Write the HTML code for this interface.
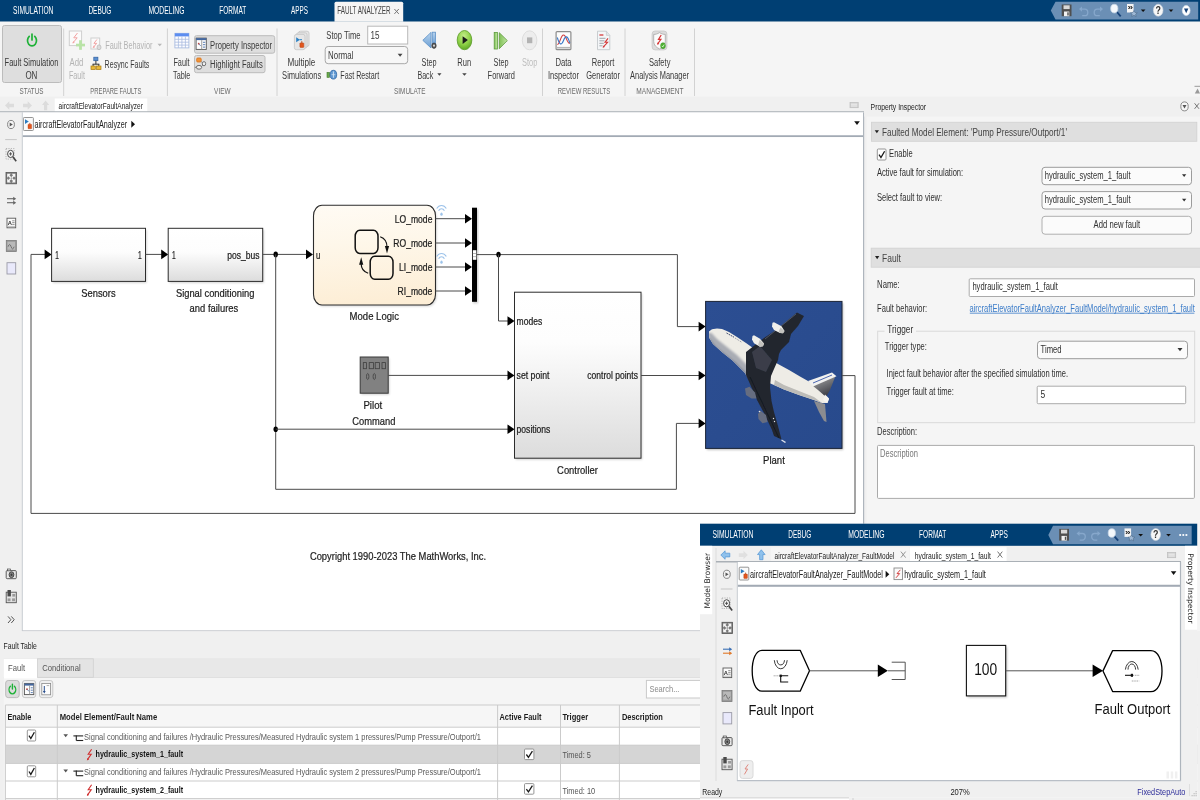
<!DOCTYPE html>
<html lang="en"><head><meta charset="utf-8"><title>Fault Analyzer</title>
<style>html,body{margin:0;padding:0;background:#f0f0f0;overflow:hidden}svg{display:block;will-change:transform;font-family:"Liberation Sans",sans-serif}</style></head>
<body>
<svg width="1200" height="800" viewBox="0 0 1200 800">
<rect x="0" y="0" width="1200" height="800" fill="#f0f0f0"/>
<rect x="0" y="0" width="1200" height="21.7" fill="#003f73"/>
<rect x="0" y="21.7" width="1200" height="75" fill="#f5f5f5"/>
<path d="M334.5,21.7 V3.3 Q334.5,1.8 336,1.8 H401.7 Q403.2,1.8 403.2,3.3 V21.7 Z" fill="#f5f5f5" />
<text x="13.1" y="14" font-size="10" fill="#fff" textLength="40.3" lengthAdjust="spacingAndGlyphs">SIMULATION</text>
<text x="88.4" y="14" font-size="10" fill="#fff" textLength="23" lengthAdjust="spacingAndGlyphs">DEBUG</text>
<text x="148.4" y="14" font-size="10" fill="#fff" textLength="36" lengthAdjust="spacingAndGlyphs">MODELING</text>
<text x="219.3" y="14" font-size="10" fill="#fff" textLength="26.9" lengthAdjust="spacingAndGlyphs">FORMAT</text>
<text x="291.1" y="14" font-size="10" fill="#fff" textLength="16.8" lengthAdjust="spacingAndGlyphs">APPS</text>
<text x="337.3" y="14" font-size="10" fill="#444" textLength="53.3" lengthAdjust="spacingAndGlyphs">FAULT ANALYZER</text>
<line x1="394.4" y1="9" x2="398.8" y2="13.9" stroke="#777" stroke-width="1" />
<line x1="398.8" y1="9" x2="394.4" y2="13.9" stroke="#777" stroke-width="1" />
<polygon points="1050.8,10.6 1055.5,1.8 1198.2,1.8 1198.2,19.5 1055.5,19.5" fill="#6b8fb5" />
<rect x="1061.7" y="4.5" width="9.8" height="11.7" fill="#4f4f4f"/>
<rect x="1063.5" y="5.3" width="6.2" height="3.8" fill="#d8d8d8"/>
<rect x="1064" y="11.5" width="5.3" height="4.7" fill="#f2f2f2"/>
<rect x="1067.3" y="12.3" width="1.4" height="3.2" fill="#4f4f4f"/>
<path d="M1080.6,9.1 h4.2 a3,3.3 0 0 1 0,6.6 h-2.6" fill="none" stroke="#86a7cb" stroke-width="1.3" />
<polygon points="1079,9.1 1082,6.5 1082,11.7" fill="#86a7cb" />
<path d="M1101.4,9.1 h-4.2 a3,3.3 0 0 0 0,6.6 h2.6" fill="none" stroke="#86a7cb" stroke-width="1.3" />
<polygon points="1103,9.1 1100,6.5 1100,11.7" fill="#86a7cb" />
<line x1="1116.5" y1="11.5" x2="1120.7" y2="16.3" stroke="#17437a" stroke-width="1.8" />
<ellipse cx="1114.3" cy="8.6" rx="3.6" ry="4.3" fill="#f4f8fc" stroke="#c9d7e6" stroke-width="0.8" />
<rect x="1127" y="4" width="6.6" height="8.5" fill="#f4f4f4"/>
<text x="1127.4" y="10.3" font-size="8" fill="#222" textLength="5.6" lengthAdjust="spacingAndGlyphs" font-weight="bold">»</text>
<path d="M1133.9,10.6 l1.2,2 l2.2,0.2 l-1.7,1.5 l0.5,2.2 l-2.2,-1.2 l-2.2,1.2 l0.5,-2.2 l-1.7,-1.5 l2.2,-0.2z" fill="#9fb9d6" stroke="#46627f" stroke-width="0.5" />
<polygon points="1140.8,9.5 1145.5,9.5 1143.15,12" fill="#111" />
<ellipse cx="1158.2" cy="10.2" rx="4.8" ry="6" fill="#f6f6f6" stroke="#d0d8e0" stroke-width="0.6" />
<text x="1155.6" y="13.8" font-size="10" fill="#333" textLength="5.4" lengthAdjust="spacingAndGlyphs" font-weight="bold">?</text>
<polygon points="1168.7,9.5 1173.3,9.5 1171,12" fill="#111" />
<ellipse cx="1186.2" cy="10.5" rx="3.9" ry="5.1" fill="#fff" stroke="#dfe7ef" stroke-width="0.6" />
<polygon points="1184,8.6 1188.4,8.6 1186.2,13.3" fill="#17437a" />
<rect x="2.5" y="25.5" width="59" height="57" fill="#dedede" stroke="#bcbcbc" stroke-width="1" rx="2"/>
<path d="M29.23,36.42 A4.5,5.3 0 1 0 34.77,36.42" fill="none" stroke="#1db136" stroke-width="1.7" stroke-linecap="round"/>
<line x1="32" y1="34.1" x2="32" y2="40" stroke="#1db136" stroke-width="1.7" stroke-linecap="round"/>
<text x="4.6" y="65.8" font-size="10" fill="#3a3a3a" textLength="53.8" lengthAdjust="spacingAndGlyphs">Fault Simulation</text>
<text x="25.4" y="78.6" font-size="10" fill="#3a3a3a" textLength="12" lengthAdjust="spacingAndGlyphs">ON</text>
<text x="19.6" y="93.7" font-size="8.7" fill="#6a6a6a" textLength="23.8" lengthAdjust="spacingAndGlyphs">STATUS</text>
<line x1="63.7" y1="28.5" x2="63.7" y2="96" stroke="#d2d2d2" stroke-width="1" />
<rect x="69.3" y="31" width="12.3" height="14.6" fill="#fbfbfb" stroke="#cfcfcf" stroke-width="1"/>
<polyline points="77.47,33 73.75,37.8 77.16,37.8 72.82,43" fill="none" stroke="#f2a3a3" stroke-width="1" stroke-linejoin="miter"/>
<polygon points="72.52,43.5 74.72,42.7 73.22,41.1" fill="#f2a3a3" />
<rect x="79.1" y="40.2" width="2.8" height="9.6" fill="#b9e3a7"/>
<rect x="76" y="43.7" width="9" height="2.7" fill="#b9e3a7"/>
<text x="69.6" y="65.6" font-size="10" fill="#b4b4b4" textLength="13.8" lengthAdjust="spacingAndGlyphs">Add</text>
<text x="68.9" y="78.6" font-size="10" fill="#b4b4b4" textLength="16" lengthAdjust="spacingAndGlyphs">Fault</text>
<rect x="90.9" y="38" width="8.8" height="11" fill="#fbfbfb" stroke="#cfcfcf" stroke-width="1"/>
<polyline points="96.95,39.5 93.95,43.34 96.7,43.34 93.2,47.5" fill="none" stroke="#f2a3a3" stroke-width="1" stroke-linejoin="miter"/>
<polygon points="92.9,48 95.1,47.2 93.6,45.6" fill="#f2a3a3" />
<ellipse cx="99" cy="47.3" rx="2" ry="2.4" fill="#dcdcdc" stroke="#bdbdbd" stroke-width="0.8" />
<text x="105.3" y="48.6" font-size="10" fill="#b4b4b4" textLength="47.1" lengthAdjust="spacingAndGlyphs">Fault Behavior</text>
<polygon points="157.5,43.7 162,43.7 159.75,46.2" fill="#b8b8b8" />
<rect x="93.8" y="57.2" width="4.1" height="3.5" fill="#5b8fd0" stroke="#2f5f9f" stroke-width="0.7"/>
<line x1="95.9" y1="60.7" x2="95.9" y2="64.2" stroke="#333" stroke-width="1" />
<line x1="92.6" y1="64.2" x2="99.3" y2="64.2" stroke="#333" stroke-width="1" />
<line x1="93.1" y1="64.2" x2="93.1" y2="66" stroke="#333" stroke-width="1" />
<line x1="98.8" y1="64.2" x2="98.8" y2="66" stroke="#333" stroke-width="1" />
<rect x="91" y="66" width="4.3" height="3.6" fill="#e8b83a" stroke="#a87a10" stroke-width="0.7"/>
<rect x="96.6" y="66" width="4.4" height="3.6" fill="#e8b83a" stroke="#a87a10" stroke-width="0.7"/>
<text x="104.6" y="68.1" font-size="10" fill="#3a3a3a" textLength="44.8" lengthAdjust="spacingAndGlyphs">Resync Faults</text>
<text x="90.3" y="93.7" font-size="8.7" fill="#6a6a6a" textLength="51.1" lengthAdjust="spacingAndGlyphs">PREPARE FAULTS</text>
<line x1="167.4" y1="28.5" x2="167.4" y2="96" stroke="#d2d2d2" stroke-width="1" />
<rect x="174.9" y="33.3" width="14" height="14.6" fill="#fdfdff" stroke="#9fb4dd" stroke-width="0.8"/>
<rect x="174.9" y="33.3" width="14" height="3.1" fill="#5c8df0"/>
<line x1="178.4" y1="36.4" x2="178.4" y2="47.9" stroke="#a9bbdf" stroke-width="0.8" />
<line x1="181.9" y1="36.4" x2="181.9" y2="47.9" stroke="#a9bbdf" stroke-width="0.8" />
<line x1="185.4" y1="36.4" x2="185.4" y2="47.9" stroke="#a9bbdf" stroke-width="0.8" />
<line x1="174.9" y1="39.3" x2="188.9" y2="39.3" stroke="#a9bbdf" stroke-width="0.8" />
<line x1="174.9" y1="42.2" x2="188.9" y2="42.2" stroke="#a9bbdf" stroke-width="0.8" />
<line x1="174.9" y1="45.1" x2="188.9" y2="45.1" stroke="#a9bbdf" stroke-width="0.8" />
<text x="173.4" y="65.6" font-size="10" fill="#3a3a3a" textLength="16.2" lengthAdjust="spacingAndGlyphs">Fault</text>
<text x="173.1" y="78.6" font-size="10" fill="#3a3a3a" textLength="17.3" lengthAdjust="spacingAndGlyphs">Table</text>
<rect x="194.5" y="35.7" width="80.2" height="17.5" fill="#dedede" stroke="#bcbcbc" stroke-width="1" rx="2"/>
<rect x="196.1" y="38.1" width="10.2" height="11.3" fill="#fdfdfd" stroke="#555" stroke-width="0.9"/>
<rect x="196.1" y="38.1" width="10.2" height="2" fill="#45689f"/>
<line x1="201.71" y1="40.1" x2="201.71" y2="49.4" stroke="#8a8a8a" stroke-width="0.8" />
<line x1="202.91" y1="42.3" x2="205.3" y2="42.3" stroke="#5b7fb5" stroke-width="1" />
<line x1="202.91" y1="44.7" x2="205.3" y2="44.7" stroke="#5b7fb5" stroke-width="1" />
<line x1="202.91" y1="47.1" x2="205.3" y2="47.1" stroke="#5b7fb5" stroke-width="1" />
<ellipse cx="198.7" cy="43.7" rx="0.9" ry="0.9" fill="#d04030" />
<line x1="198.7" y1="43.7" x2="200.7" y2="45.9" stroke="#4a6fa8" stroke-width="0.8" />
<text x="210.1" y="48.6" font-size="10" fill="#3a3a3a" textLength="62" lengthAdjust="spacingAndGlyphs">Property Inspector</text>
<rect x="194.5" y="55.5" width="70.5" height="17.2" fill="#dedede" stroke="#bcbcbc" stroke-width="1" rx="2"/>
<rect x="196.7" y="58" width="4.5" height="4" fill="#f0943a" stroke="#d9731a" stroke-width="0.8" rx="1"/>
<ellipse cx="204" cy="63.7" rx="1.7" ry="2.1" fill="#f0f0f0" stroke="#666" stroke-width="0.9" />
<ellipse cx="199" cy="67.3" rx="2.7" ry="1.9" fill="#f0f0f0" stroke="#666" stroke-width="0.9" />
<line x1="201.2" y1="61.6" x2="202.5" y2="62.8" stroke="#666" stroke-width="0.8" />
<line x1="202.8" y1="65.3" x2="201.5" y2="66.3" stroke="#666" stroke-width="0.8" />
<line x1="196.3" y1="67.3" x2="194.9" y2="67.3" stroke="#666" stroke-width="0.8" />
<text x="210.1" y="67.8" font-size="10" fill="#3a3a3a" textLength="52.6" lengthAdjust="spacingAndGlyphs">Highlight Faults</text>
<text x="214.1" y="93.7" font-size="8.7" fill="#6a6a6a" textLength="16.5" lengthAdjust="spacingAndGlyphs">VIEW</text>
<line x1="277" y1="28.5" x2="277" y2="96" stroke="#d2d2d2" stroke-width="1" />
<rect x="298.4" y="31.2" width="10.6" height="15.3" fill="#e6e6e6" stroke="#c4c4c4" stroke-width="0.8" rx="2"/>
<rect x="296.4" y="32.8" width="10.6" height="15.3" fill="#e6e6e6" stroke="#c4c4c4" stroke-width="0.8" rx="2"/>
<rect x="294.4" y="34.4" width="10.6" height="15.3" fill="#e6e6e6" stroke="#c4c4c4" stroke-width="0.8" rx="2"/>
<polygon points="296.2,37.2 299.9,39.7 296.2,42.2" fill="#2a80c4" />
<line x1="299.5" y1="39.7" x2="302" y2="39.7" stroke="#2a80c4" stroke-width="1" />
<rect x="299.9" y="42.9" width="3.9" height="4.5" fill="#e2561e" stroke="#b53e10" stroke-width="0.5" rx="0.6"/>
<line x1="301.8" y1="41.2" x2="301.8" y2="42.9" stroke="#b53e10" stroke-width="0.9" />
<text x="287.4" y="65.6" font-size="10" fill="#3a3a3a" textLength="28" lengthAdjust="spacingAndGlyphs">Multiple</text>
<text x="282.1" y="78.6" font-size="10" fill="#3a3a3a" textLength="39.1" lengthAdjust="spacingAndGlyphs">Simulations</text>
<text x="326.3" y="38.8" font-size="10" fill="#3a3a3a" textLength="34.3" lengthAdjust="spacingAndGlyphs">Stop Time</text>
<rect x="367.7" y="26.2" width="40" height="17.8" fill="#fff" stroke="#b8b8b8" stroke-width="1"/>
<text x="370.6" y="38.8" font-size="10" fill="#3a3a3a" textLength="9" lengthAdjust="spacingAndGlyphs">15</text>
<rect x="325.2" y="46.5" width="82.5" height="17.2" fill="#f7f7f7" stroke="#a8a8a8" stroke-width="1" rx="3"/>
<text x="328.1" y="59.1" font-size="10" fill="#3a3a3a" textLength="25.3" lengthAdjust="spacingAndGlyphs">Normal</text>
<polygon points="397.7,53.7 402.5,53.7 400.1,56.7" fill="#444" />
<rect x="327" y="72.4" width="2.6" height="5" fill="#6aa84a" stroke="#3f7a2a" stroke-width="0.6"/>
<ellipse cx="333.4" cy="74.7" rx="3.3" ry="4.4" fill="#5f98d2" stroke="#2f66a6" stroke-width="0.8" />
<line x1="333.4" y1="71.4" x2="333.4" y2="77.8" stroke="#d8e8f8" stroke-width="0.9" />
<line x1="331.5" y1="74.7" x2="335.3" y2="74.7" stroke="#d8e8f8" stroke-width="0.7" />
<text x="340.3" y="78.6" font-size="10" fill="#3a3a3a" textLength="38.9" lengthAdjust="spacingAndGlyphs">Fast Restart</text>
<text x="394.1" y="93.7" font-size="8.7" fill="#6a6a6a" textLength="31.3" lengthAdjust="spacingAndGlyphs">SIMULATE</text>
<defs><linearGradient id="sbg" x1="0" y1="0" x2="0" y2="1"><stop offset="0" stop-color="#b9d4ee"/><stop offset="1" stop-color="#6b9fd4"/></linearGradient></defs>
<polygon points="422.8,40.3 431,32.4 431,48" fill="url(#sbg)" stroke="#5b8fc6" stroke-width="0.8" stroke-linejoin="round"/>
<rect x="432.2" y="32.2" width="3.2" height="11.8" fill="url(#sbg)" stroke="#5b8fc6" stroke-width="0.8"/>
<ellipse cx="434" cy="45.7" rx="2.2" ry="2.7" fill="#555" stroke="#333" stroke-width="0.6" />
<ellipse cx="434" cy="45.7" rx="0.9" ry="1.1" fill="#e8e8e8" />
<text x="421.6" y="65.6" font-size="10" fill="#3a3a3a" textLength="15" lengthAdjust="spacingAndGlyphs">Step</text>
<text x="417.4" y="78.6" font-size="10" fill="#3a3a3a" textLength="15.8" lengthAdjust="spacingAndGlyphs">Back</text>
<polygon points="437.3,73.2 441.5,73.2 439.4,75.8" fill="#444" />
<defs><radialGradient id="rung" cx="0.45" cy="0.3" r="0.8"><stop offset="0" stop-color="#c4ec8a"/><stop offset="0.55" stop-color="#8ccf45"/><stop offset="1" stop-color="#4f9a1c"/></radialGradient></defs>
<ellipse cx="464.5" cy="40.1" rx="7.3" ry="9.6" fill="url(#rung)" stroke="#62a030" stroke-width="0.9" />
<polygon points="462.6,36.3 462.6,43.9 467.9,40.1" fill="#1a1a1a" />
<text x="457.3" y="65.6" font-size="10" fill="#3a3a3a" textLength="13.8" lengthAdjust="spacingAndGlyphs">Run</text>
<polygon points="462.2,73.2 466.7,73.2 464.45,75.8" fill="#444" />
<defs><linearGradient id="sfg" x1="0" y1="0" x2="1" y2="0"><stop offset="0" stop-color="#7fbf55"/><stop offset="1" stop-color="#c3e8a6"/></linearGradient></defs>
<rect x="494.2" y="32.5" width="3.2" height="16.5" fill="url(#sfg)" stroke="#5d9b3c" stroke-width="0.8"/>
<polygon points="499.3,32.7 499.3,48.7 507.3,40.6" fill="url(#sfg)" stroke="#5d9b3c" stroke-width="0.8" stroke-linejoin="round"/>
<text x="493.6" y="65.6" font-size="10" fill="#3a3a3a" textLength="15" lengthAdjust="spacingAndGlyphs">Step</text>
<text x="487.6" y="78.6" font-size="10" fill="#3a3a3a" textLength="27.3" lengthAdjust="spacingAndGlyphs">Forward</text>
<ellipse cx="529.6" cy="40.3" rx="7.3" ry="9.5" fill="#ededed" stroke="#dadada" stroke-width="0.9" />
<rect x="527" y="37.4" width="5.3" height="5.8" fill="#b3b3b3"/>
<text x="522.1" y="65.6" font-size="10" fill="#bdbdbd" textLength="15.3" lengthAdjust="spacingAndGlyphs">Stop</text>
<line x1="542.5" y1="28.5" x2="542.5" y2="96" stroke="#d2d2d2" stroke-width="1" />
<rect x="556.1" y="31.6" width="14.8" height="18.1" fill="#fcfcfc" stroke="#8c8c8c" stroke-width="1.2" rx="1"/>
<path d="M557.3,44.5 C560,44.5 560.6,35 563.5,35 C566.3,35 566.8,43.5 569.8,43.5" fill="none" stroke="#d23a3a" stroke-width="1.1" />
<path d="M557.3,37.5 C559.6,45.5 561.5,45.5 563.5,40.5 C565.4,35.5 567.4,35 569.8,43" fill="none" stroke="#3a78c8" stroke-width="1.1" />
<line x1="556.6" y1="47.7" x2="570.4" y2="47.7" stroke="#b5b5b5" stroke-width="1.6" />
<text x="555.4" y="65.6" font-size="10" fill="#3a3a3a" textLength="16.2" lengthAdjust="spacingAndGlyphs">Data</text>
<text x="547.9" y="78.6" font-size="10" fill="#3a3a3a" textLength="31" lengthAdjust="spacingAndGlyphs">Inspector</text>
<path d="M597.5,31.2 H606.4 L609.8,35.4 V49.7 H597.5 Z" fill="#f4f6f8" stroke="#c4c8cc" stroke-width="0.9" />
<path d="M606.4,31.2 V35.4 H609.8" fill="#e2e6ea" stroke="#c4c8cc" stroke-width="0.7" />
<line x1="599.4" y1="35" x2="603.4" y2="35" stroke="#d43a3a" stroke-width="1.3" />
<line x1="599.4" y1="38.3" x2="605.5" y2="38.3" stroke="#8c9298" stroke-width="0.8" />
<line x1="599.4" y1="40.8" x2="604.5" y2="40.8" stroke="#8c9298" stroke-width="0.8" />
<line x1="599.4" y1="43.3" x2="603.8" y2="43.3" stroke="#8c9298" stroke-width="0.8" />
<line x1="599.4" y1="45.8" x2="602.5" y2="45.8" stroke="#8c9298" stroke-width="0.8" />
<polyline points="608,38.3 605,42.3 607.6,42.3 603.2,47.2" fill="none" stroke="#d43a3a" stroke-width="1.1" />
<polygon points="602.6,47.8 604.9,47 603.5,45.5" fill="#d43a3a" />
<text x="591.8" y="65.6" font-size="10" fill="#3a3a3a" textLength="22.6" lengthAdjust="spacingAndGlyphs">Report</text>
<text x="586.3" y="78.6" font-size="10" fill="#3a3a3a" textLength="33.6" lengthAdjust="spacingAndGlyphs">Generator</text>
<text x="557.8" y="93.7" font-size="8.7" fill="#6a6a6a" textLength="52.4" lengthAdjust="spacingAndGlyphs">REVIEW RESULTS</text>
<line x1="625" y1="28.5" x2="625" y2="96" stroke="#d2d2d2" stroke-width="1" />
<rect x="652.1" y="31" width="14.8" height="18.9" fill="#dcdcdc" stroke="#c6c6c6" stroke-width="0.8" rx="3"/>
<path d="M659.5,32.6 C657.4,34 655.6,34.4 653.7,34.4 V41.5 C653.7,45 656.2,47.5 659.5,48.9 C662.8,47.5 665.3,45 665.3,41.5 V34.4 C663.4,34.4 661.6,34 659.5,32.6 Z" fill="#fbfbfb" stroke="#a6a6a6" stroke-width="0.8" />
<polyline points="661.2,35 658.5,39.4 660.9,39.4 657.6,44" fill="none" stroke="#d63434" stroke-width="1.2" />
<polygon points="657,44.8 659.3,43.9 657.8,42.3" fill="#d63434" />
<ellipse cx="663" cy="45.7" rx="2.4" ry="3" fill="#4fb335" stroke="#3a8f25" stroke-width="0.5" />
<polyline points="661.9,45.9 662.7,47 664.2,44.6" fill="none" stroke="#e8f8e0" stroke-width="0.8" />
<text x="649.1" y="65.6" font-size="10" fill="#3a3a3a" textLength="21.3" lengthAdjust="spacingAndGlyphs">Safety</text>
<text x="630.1" y="78.6" font-size="10" fill="#3a3a3a" textLength="59" lengthAdjust="spacingAndGlyphs">Analysis Manager</text>
<text x="636.3" y="93.7" font-size="8.7" fill="#6a6a6a" textLength="47.1" lengthAdjust="spacingAndGlyphs">MANAGEMENT</text>
<line x1="694.5" y1="28.5" x2="694.5" y2="96" stroke="#d2d2d2" stroke-width="1" />
<line x1="1194.5" y1="86.3" x2="1200" y2="86.3" stroke="#9a9a9a" stroke-width="1" />
<polygon points="1194.8,93.5 1200,93.5 1197.6,88.5" fill="#9a9a9a" />
<defs><filter id="blur1" x="-10%" y="-10%" width="120%" height="120%"><feGaussianBlur stdDeviation="0.9"/></filter></defs>
<rect x="0" y="96.7" width="1200" height="15.1" fill="#f0f0f0"/>
<polygon points="5,105.5 9.32,101.3 9.32,103.65 14,103.65 14,107.35 9.32,107.35 9.32,109.7" fill="#dcdcdc" stroke-linejoin="round"/>
<polygon points="32,105.5 27.68,101.3 27.68,103.65 23,103.65 23,107.35 27.68,107.35 27.68,109.7" fill="#dcdcdc" stroke-linejoin="round"/>
<polygon points="45.6,100.4 49.2,105.1 47.18,105.1 47.18,110.2 44.02,110.2 44.02,105.1 42,105.1" fill="#dcdcdc" stroke-linejoin="round"/>
<rect x="54.7" y="98.5" width="92.6" height="13.5" fill="#fff"/>
<text x="58.6" y="108.7" font-size="9.4" fill="#222" textLength="84.3" lengthAdjust="spacingAndGlyphs">aircraftElevatorFaultAnalyzer</text>
<rect x="850" y="102.5" width="8.2" height="5.2" fill="#d2d2d2" stroke="#bdbdbd" stroke-width="0.7"/>
<line x1="851" y1="104.2" x2="857.2" y2="104.2" stroke="#f4f4f4" stroke-width="0.8" />
<line x1="851" y1="106" x2="857.2" y2="106" stroke="#f4f4f4" stroke-width="0.8" />
<line x1="0" y1="111.9" x2="864" y2="111.9" stroke="#aab0b6" stroke-width="1.4" />
<rect x="0" y="112.4" width="22" height="518.6" fill="#f0f0f0"/>
<rect x="22.5" y="112.4" width="841" height="23.6" fill="#fff"/>
<line x1="22.5" y1="136.2" x2="863.5" y2="136.2" stroke="#a2aab4" stroke-width="2" />
<ellipse cx="11" cy="124.5" rx="3.4" ry="4.1" fill="#f4f4f4" stroke="#777" stroke-width="0.9" />
<polygon points="9.7,122.6 9.7,126.4 12.8,124.5" fill="#555" />
<rect x="23.4" y="117.5" width="10" height="13" fill="#fafafa" stroke="#8a8a8a" stroke-width="0.9" rx="0.8"/>
<polygon points="25,119.3 25,123.9 28.8,121.6" fill="#2a7bc0" />
<rect x="28" y="124.3" width="3.6" height="4.4" fill="#e2561e" stroke="#b53e10" stroke-width="0.4" rx="0.5"/>
<line x1="29.8" y1="122.9" x2="29.8" y2="124.3" stroke="#b53e10" stroke-width="0.8" />
<text x="34.4" y="127.7" font-size="10.2" fill="#222" textLength="92.7" lengthAdjust="spacingAndGlyphs">aircraftElevatorFaultAnalyzer</text>
<polygon points="131.3,120.8 131.3,127.8 135,124.3" fill="#111" />
<polygon points="854.2,121.3 859.8,121.3 857,125.1" fill="#111" />
<rect x="22.5" y="137.1" width="841" height="493.5" fill="#fff"/>
<line x1="22.3" y1="112.4" x2="22.3" y2="631" stroke="#c9cdd3" stroke-width="1" />
<line x1="863.6" y1="112.4" x2="863.6" y2="631" stroke="#aeb5bd" stroke-width="1.2" />
<line x1="22" y1="630.8" x2="864" y2="630.8" stroke="#c3c7cc" stroke-width="1" />
<line x1="5.2" y1="139.6" x2="16.8" y2="139.6" stroke="#c6c6c6" stroke-width="1" />
<rect x="6" y="148.6" width="8.2" height="10.5" fill="none" stroke="#9a9a9a" stroke-width="0.7" stroke-dasharray="1.2 1.2"/>
<ellipse cx="10.6" cy="153.9" rx="3" ry="3.6" fill="#fafafa" stroke="#444" stroke-width="1" />
<line x1="12.9" y1="156.8" x2="16.2" y2="161.2" stroke="#444" stroke-width="1.6" />
<line x1="9.1" y1="153.9" x2="12.1" y2="153.9" stroke="#444" stroke-width="0.9" />
<line x1="10.6" y1="152.2" x2="10.6" y2="155.6" stroke="#444" stroke-width="0.9" />
<rect x="6" y="172.5" width="10.5" height="11.3" fill="#7a7a7a" stroke="#555" stroke-width="0.8"/>
<polygon points="7.2,173.8 10.8,173.8 7.2,177.8" fill="#f6f6f6" />
<line x1="8" y1="174.7" x2="10.8" y2="177.7" stroke="#f6f6f6" stroke-width="1.5" />
<polygon points="15.3,173.8 11.7,173.8 15.3,177.8" fill="#f6f6f6" />
<line x1="14.5" y1="174.7" x2="11.7" y2="177.7" stroke="#f6f6f6" stroke-width="1.5" />
<polygon points="7.2,182.5 10.8,182.5 7.2,178.5" fill="#f6f6f6" />
<line x1="8" y1="181.6" x2="10.8" y2="178.6" stroke="#f6f6f6" stroke-width="1.5" />
<polygon points="15.3,182.5 11.7,182.5 15.3,178.5" fill="#f6f6f6" />
<line x1="14.5" y1="181.6" x2="11.7" y2="178.6" stroke="#f6f6f6" stroke-width="1.5" />
<line x1="7" y1="198.7" x2="14" y2="198.7" stroke="#666" stroke-width="1.1" />
<polygon points="16.2,198.7 13.2,196.7 13.2,200.7" fill="#666" />
<line x1="7" y1="202.7" x2="14" y2="202.7" stroke="#666" stroke-width="1.1" />
<polygon points="16.2,202.7 13.2,200.7 13.2,204.7" fill="#666" />
<rect x="7" y="218.2" width="8.7" height="9.6" fill="#fbfbfb" stroke="#5a5a5a" stroke-width="0.9"/>
<text x="7.8" y="224.8" font-size="5.8" fill="#333" textLength="4.2" lengthAdjust="spacingAndGlyphs" font-weight="bold">A</text>
<line x1="12.2" y1="220.8" x2="14.6" y2="220.8" stroke="#666" stroke-width="0.7" />
<line x1="12.2" y1="222.6" x2="14.6" y2="222.6" stroke="#666" stroke-width="0.7" />
<line x1="12.2" y1="224.4" x2="14.6" y2="224.4" stroke="#666" stroke-width="0.7" />
<line x1="7.6" y1="226.4" x2="15.1" y2="226.4" stroke="#bdbdbd" stroke-width="1" />
<rect x="6.3" y="240.5" width="10" height="11" fill="#9a9a9a" stroke="#7a7a7a" stroke-width="0.8"/>
<rect x="7.5" y="241.8" width="7.6" height="7.9" fill="#b9b9b9"/>
<path d="M8.1,246.7 q1.5,-4.5 3,0 t3,0" fill="none" stroke="#6a6a6a" stroke-width="0.9" />
<rect x="7" y="262.7" width="8.7" height="11.3" fill="#e9e9fb" stroke="#9a9aa6" stroke-width="0.9"/>
<rect x="6.2" y="570.6" width="10.1" height="8.1" fill="#e9e9e9" stroke="#4c4c4c" stroke-width="0.9" rx="1"/>
<rect x="7.4" y="569" width="3.2" height="1.8" fill="#e9e9e9" stroke="#4c4c4c" stroke-width="0.7"/>
<ellipse cx="11.5" cy="574.7" rx="2.4" ry="2.9" fill="#8a8a8a" stroke="#3c3c3c" stroke-width="0.9" />
<ellipse cx="11.5" cy="574.7" rx="1" ry="1.2" fill="#3c3c3c" />
<rect x="6.2" y="592.2" width="10.1" height="10.5" fill="#e3e3e3" stroke="#555" stroke-width="0.9"/>
<rect x="7.5" y="590" width="3.4" height="6.4" fill="#4a4a4a"/>
<rect x="12.3" y="594" width="2.9" height="2.6" fill="#9a9a9a"/>
<rect x="7.6" y="598.4" width="2.9" height="2.8" fill="#9a9a9a"/>
<rect x="12.1" y="598.4" width="2.9" height="2.8" fill="#9a9a9a"/>
<polyline points="8,616.4 10.9,619.7 8,623" fill="none" stroke="#555" stroke-width="1" />
<polyline points="11.3,616.4 14.2,619.7 11.3,623" fill="none" stroke="#555" stroke-width="1" />
<polyline points="855,375.6 855,513.4 31,513.4 31,254.4 45,254.4" fill="none" stroke="#4a4a4a" stroke-width="1" />
<polygon points="51.6,254.4 44.6,249.6 44.6,259.2" fill="#000" />
<defs><linearGradient id="gb1" x1="0" y1="0" x2="0" y2="1"><stop offset="0" stop-color="#fff"/><stop offset="0.45" stop-color="#fdfdfd"/><stop offset="1" stop-color="#dcdcdc"/></linearGradient></defs>
<rect x="52.8" y="229.8" width="93.9" height="53.1" fill="#000" opacity="0.18" filter="url(#blur1)"/>
<rect x="51.6" y="228.3" width="93.9" height="53.1" fill="url(#gb1)" stroke="#2c2c2c" stroke-width="1"/>
<text x="55.2" y="259" font-size="10.2" fill="#1c1c1c" textLength="3.6" lengthAdjust="spacingAndGlyphs" stroke="#1c1c1c" stroke-width="0.22">1</text>
<text x="138.1" y="259" font-size="10.2" fill="#1c1c1c" textLength="3.7" lengthAdjust="spacingAndGlyphs" stroke="#1c1c1c" stroke-width="0.22">1</text>
<text x="81.3" y="296.5" font-size="11.3" fill="#1c1c1c" textLength="34.3" lengthAdjust="spacingAndGlyphs" stroke="#1c1c1c" stroke-width="0.22">Sensors</text>
<line x1="145.5" y1="254.4" x2="162" y2="254.4" stroke="#4a4a4a" stroke-width="1" />
<polygon points="168.2,254.4 161.2,249.6 161.2,259.2" fill="#000" />
<defs><linearGradient id="gb2" x1="0" y1="0" x2="0" y2="1"><stop offset="0" stop-color="#fff"/><stop offset="0.45" stop-color="#fdfdfd"/><stop offset="1" stop-color="#dcdcdc"/></linearGradient></defs>
<rect x="169.4" y="229.8" width="94.5" height="53.1" fill="#000" opacity="0.18" filter="url(#blur1)"/>
<rect x="168.2" y="228.3" width="94.5" height="53.1" fill="url(#gb2)" stroke="#2c2c2c" stroke-width="1"/>
<text x="172" y="259" font-size="10.2" fill="#1c1c1c" textLength="3.7" lengthAdjust="spacingAndGlyphs" stroke="#1c1c1c" stroke-width="0.22">1</text>
<text x="227.3" y="259" font-size="10.2" fill="#1c1c1c" textLength="32.3" lengthAdjust="spacingAndGlyphs" stroke="#1c1c1c" stroke-width="0.22">pos_bus</text>
<text x="175.9" y="296.5" font-size="11.3" fill="#1c1c1c" textLength="78.5" lengthAdjust="spacingAndGlyphs" stroke="#1c1c1c" stroke-width="0.22">Signal conditioning</text>
<text x="189.6" y="312.2" font-size="11.3" fill="#1c1c1c" textLength="48.6" lengthAdjust="spacingAndGlyphs" stroke="#1c1c1c" stroke-width="0.22">and failures</text>
<line x1="262.7" y1="254.4" x2="306" y2="254.4" stroke="#4a4a4a" stroke-width="1" />
<polygon points="313,254.4 306,249.6 306,259.2" fill="#000" />
<ellipse cx="275.7" cy="254.4" rx="2.2" ry="2.8" fill="#000" />
<polyline points="275.7,254.4 275.7,489.3 676.4,489.3 676.4,423.4 699,423.4" fill="none" stroke="#4a4a4a" stroke-width="1" />
<polygon points="705.6,423.4 698.6,418.6 698.6,428.2" fill="#000" />
<ellipse cx="275.7" cy="429.2" rx="2.2" ry="2.8" fill="#000" />
<line x1="275.7" y1="429.2" x2="508" y2="429.2" stroke="#4a4a4a" stroke-width="1" />
<polygon points="514.5,429.2 507.5,424.4 507.5,434" fill="#000" />
<defs><linearGradient id="gml" x1="0" y1="0" x2="0.1" y2="1"><stop offset="0" stop-color="#fffbf4"/><stop offset="0.4" stop-color="#fef7ea"/><stop offset="1" stop-color="#fdeed6"/></linearGradient></defs>
<rect x="314.7" y="206.8" width="122" height="99.8" fill="#000" rx="8.5" ry="10.5" opacity="0.16" filter="url(#blur1)"/>
<rect x="313.5" y="205.3" width="122" height="99.7" fill="url(#gml)" stroke="#2c2c2c" stroke-width="1.1" rx="8.5" ry="10.5"/>
<text x="316" y="258.7" font-size="10.2" fill="#1c1c1c" textLength="4.3" lengthAdjust="spacingAndGlyphs" stroke="#1c1c1c" stroke-width="0.22">u</text>
<text x="394.8" y="222.7" font-size="10.2" fill="#1c1c1c" textLength="37.6" lengthAdjust="spacingAndGlyphs" stroke="#1c1c1c" stroke-width="0.22">LO_mode</text>
<text x="393.3" y="246.7" font-size="10.2" fill="#1c1c1c" textLength="39.1" lengthAdjust="spacingAndGlyphs" stroke="#1c1c1c" stroke-width="0.22">RO_mode</text>
<text x="399.1" y="270.7" font-size="10.2" fill="#1c1c1c" textLength="33.3" lengthAdjust="spacingAndGlyphs" stroke="#1c1c1c" stroke-width="0.22">LI_mode</text>
<text x="397.6" y="294.7" font-size="10.2" fill="#1c1c1c" textLength="34.8" lengthAdjust="spacingAndGlyphs" stroke="#1c1c1c" stroke-width="0.22">RI_mode</text>
<rect x="355.2" y="230.3" width="22.8" height="23.2" fill="none" stroke="#111" stroke-width="1.5" rx="4.6" ry="5.8"/>
<rect x="370.2" y="256.2" width="22.8" height="23.1" fill="none" stroke="#111" stroke-width="1.5" rx="4.6" ry="5.8"/>
<path d="M380.2,236.7 C385.5,238.5 387,242 387,247" fill="none" stroke="#111" stroke-width="1.2" />
<polygon points="387,253.6 384.9,246 389.1,246" fill="#111" />
<path d="M368.2,273.3 C363,271.5 361.2,268.5 361.2,264" fill="none" stroke="#111" stroke-width="1.2" />
<polygon points="361.2,257.2 359.1,264.8 363.3,264.8" fill="#111" />
<text x="349.6" y="320.2" font-size="11.3" fill="#1c1c1c" textLength="49.3" lengthAdjust="spacingAndGlyphs" stroke="#1c1c1c" stroke-width="0.22">Mode Logic</text>
<ellipse cx="441.5" cy="214.2" rx="1.2" ry="1.6" fill="#9dc3ea" />
<path d="M438.6,210.8 a3.4,4.2 0 0 1 5.8,0" fill="none" stroke="#9dc3ea" stroke-width="1.1" />
<path d="M436.7,208.6 a5.8,7.2 0 0 1 9.6,0" fill="none" stroke="#9dc3ea" stroke-width="1.1" />
<ellipse cx="441.5" cy="262.2" rx="1.2" ry="1.6" fill="#9dc3ea" />
<path d="M438.6,258.8 a3.4,4.2 0 0 1 5.8,0" fill="none" stroke="#9dc3ea" stroke-width="1.1" />
<path d="M436.7,256.6 a5.8,7.2 0 0 1 9.6,0" fill="none" stroke="#9dc3ea" stroke-width="1.1" />
<line x1="435.5" y1="218.7" x2="466" y2="218.7" stroke="#4a4a4a" stroke-width="1" />
<polygon points="472,218.7 465,213.9 465,223.5" fill="#000" />
<line x1="435.5" y1="243" x2="466" y2="243" stroke="#4a4a4a" stroke-width="1" />
<polygon points="472,243 465,238.2 465,247.8" fill="#000" />
<line x1="435.5" y1="267" x2="466" y2="267" stroke="#4a4a4a" stroke-width="1" />
<polygon points="472,267 465,262.2 465,271.8" fill="#000" />
<line x1="435.5" y1="291" x2="466" y2="291" stroke="#4a4a4a" stroke-width="1" />
<polygon points="472,291 465,286.2 465,295.8" fill="#000" />
<rect x="473" y="209.2" width="5.2" height="94.1" fill="#000" opacity="0.2" filter="url(#blur1)"/>
<rect x="472" y="207.7" width="5" height="94.1" fill="#000"/>
<rect x="472.8" y="250.2" width="3.6" height="9.6" fill="#fff"/>
<line x1="472.8" y1="253.5" x2="476.4" y2="253.5" stroke="#888" stroke-width="0.6" />
<line x1="472.8" y1="256.6" x2="476.4" y2="256.6" stroke="#888" stroke-width="0.6" />
<polyline points="477,254.6 677.4,254.6 677.4,326.6 699,326.6" fill="none" stroke="#4a4a4a" stroke-width="1" />
<polygon points="705.6,326.6 698.6,321.8 698.6,331.4" fill="#000" />
<ellipse cx="498.5" cy="254.6" rx="2.2" ry="2.8" fill="#000" />
<polyline points="498.5,254.6 498.5,321 508,321" fill="none" stroke="#4a4a4a" stroke-width="1" />
<polygon points="514.5,321 507.5,316.2 507.5,325.8" fill="#000" />
<rect x="361.3" y="358.4" width="28" height="36.2" fill="#000" opacity="0.2" filter="url(#blur1)"/>
<rect x="360.2" y="357" width="28" height="36.2" fill="#818181" stroke="#3a3a3a" stroke-width="1"/>
<rect x="363.3" y="362.6" width="3.3" height="6.1" fill="none" stroke="#3f3f3f" stroke-width="0.8"/>
<rect x="369.2" y="362.6" width="4.2" height="6.1" fill="none" stroke="#3f3f3f" stroke-width="0.8"/>
<rect x="375.2" y="362.6" width="4.2" height="6.1" fill="none" stroke="#3f3f3f" stroke-width="0.8"/>
<rect x="382" y="362.6" width="3.4" height="6.1" fill="none" stroke="#3f3f3f" stroke-width="0.8"/>
<ellipse cx="367.7" cy="376.5" rx="1.2" ry="3" fill="none" stroke="#3f3f3f" stroke-width="0.8" />
<ellipse cx="374.3" cy="376.5" rx="1.2" ry="3" fill="none" stroke="#3f3f3f" stroke-width="0.8" />
<text x="363.4" y="408.7" font-size="11.3" fill="#1c1c1c" textLength="18.8" lengthAdjust="spacingAndGlyphs" stroke="#1c1c1c" stroke-width="0.22">Pilot</text>
<text x="352.3" y="424.5" font-size="11.3" fill="#1c1c1c" textLength="43.1" lengthAdjust="spacingAndGlyphs" stroke="#1c1c1c" stroke-width="0.22">Command</text>
<line x1="388.2" y1="375.4" x2="508" y2="375.4" stroke="#4a4a4a" stroke-width="1" />
<polygon points="514.5,375.4 507.5,370.6 507.5,380.2" fill="#000" />
<defs><linearGradient id="gb3" x1="0" y1="0" x2="0" y2="1"><stop offset="0" stop-color="#fff"/><stop offset="0.3" stop-color="#fdfdfd"/><stop offset="1" stop-color="#dcdcdc"/></linearGradient></defs>
<rect x="515.7" y="293.7" width="126.5" height="166" fill="#000" opacity="0.18" filter="url(#blur1)"/>
<rect x="514.5" y="292.2" width="126.5" height="166" fill="url(#gb3)" stroke="#2c2c2c" stroke-width="1"/>
<text x="516.6" y="324.7" font-size="10.2" fill="#1c1c1c" textLength="25.6" lengthAdjust="spacingAndGlyphs" stroke="#1c1c1c" stroke-width="0.22">modes</text>
<text x="516.6" y="379.3" font-size="10.2" fill="#1c1c1c" textLength="32.8" lengthAdjust="spacingAndGlyphs" stroke="#1c1c1c" stroke-width="0.22">set point</text>
<text x="516.6" y="433" font-size="10.2" fill="#1c1c1c" textLength="33.8" lengthAdjust="spacingAndGlyphs" stroke="#1c1c1c" stroke-width="0.22">positions</text>
<text x="587.3" y="379.3" font-size="10.2" fill="#1c1c1c" textLength="50.6" lengthAdjust="spacingAndGlyphs" stroke="#1c1c1c" stroke-width="0.22">control points</text>
<text x="557.1" y="474" font-size="11.3" fill="#1c1c1c" textLength="40.8" lengthAdjust="spacingAndGlyphs" stroke="#1c1c1c" stroke-width="0.22">Controller</text>
<line x1="641" y1="375.5" x2="699" y2="375.5" stroke="#4a4a4a" stroke-width="1" />
<polygon points="705.6,375.5 698.6,370.7 698.6,380.3" fill="#000" />
<rect x="706.8" y="303" width="136.4" height="147" fill="#000" opacity="0.25" filter="url(#blur1)"/>
<defs><linearGradient id="sky" x1="0" y1="0" x2="1" y2="1"><stop offset="0" stop-color="#2c4e92"/><stop offset="1" stop-color="#284a8c"/></linearGradient><linearGradient id="fus" gradientUnits="userSpaceOnUse" x1="762" y1="352" x2="752" y2="370"><stop offset="0" stop-color="#f0eee9"/><stop offset="0.6" stop-color="#e1dfd9"/><stop offset="1" stop-color="#9297a3"/></linearGradient><linearGradient id="fin" gradientUnits="userSpaceOnUse" x1="818" y1="378" x2="826" y2="396"><stop offset="0" stop-color="#9a9a9a"/><stop offset="1" stop-color="#3c3e46"/></linearGradient><filter id="blur3" x="-20%" y="-20%" width="140%" height="140%"><feGaussianBlur stdDeviation="0.8"/></filter><filter id="blur2" x="-5%" y="-5%" width="110%" height="110%"><feGaussianBlur stdDeviation="0.5"/></filter><clipPath id="plc"><rect x="705.6" y="301.4" width="136.4" height="147"/></clipPath></defs>
<rect x="705.6" y="301.4" width="136.4" height="147" fill="url(#sky)"/>
<g filter="url(#blur2)" clip-path="url(#plc)">
<polygon points="814,401 825,404 826.5,422 824,421 819,412" fill="#8b8c90" />
<clipPath id="fclip"><polygon points="709,331.5 712,329.3 717,328.6 722,329 729,332 737,337 746,343 760,353 778,364 789,370 800,376.5 808,381 818,388 826,395.5 829,399 827.5,403 822,403 814,400 799,395 784,389.5 774,385 762,380 748,378 744.5,372.5 736.5,364.5 732.5,360.5 722.5,352.5 713,344 709,337.5"/></clipPath>
<polygon points="709,331.5 712,329.3 717,328.6 722,329 729,332 737,337 746,343 760,353 778,364 789,370 800,376.5 808,381 818,388 826,395.5 829,399 827.5,403 822,403 814,400 799,395 784,389.5 774,385 762,380 748,378 744.5,372.5 736.5,364.5 732.5,360.5 722.5,352.5 713,344 709,337.5" fill="#eeece6" />
<g clip-path="url(#fclip)">
<g filter="url(#blur3)">
<polygon points="705,336 712.5,340 716.5,345.5 726,353 736,361 740,365 748,373 752,379 745,384 700,347" fill="#747b8e" />
<polygon points="707,333 711.5,333 717,339 727,347 737,355 741,359 749,367 753.5,373 751,379 747,374 739.5,366.5 735.5,362.5 725.5,354.5 715.5,346.5 710.5,340" fill="#a9acb4" />
</g>
</g>
<polygon points="774,385 784,389.5 799,395 814,400 822,403 814,397 799,391 784,385 775,380" fill="#bdbcb8" />
<polygon points="813,386 835.5,376 830,390 826,397 818,390" fill="url(#fin)" />
<polygon points="808,381 832,372.5 836.5,376.2 813,386.5" fill="#f1f1ef" />
<line x1="813" y1="383" x2="832" y2="375" stroke="#3a58a8" stroke-width="0.9" />
<polygon points="825,394.5 829,398.5 827.3,403 823,400" fill="#f6f5f0" />
<polygon points="746,352 764,338 773,332 782,325 797,312.5 804,316 798,326 791,334 789,342 781,350 779,354 778,360 774,369 771,376 770,387 771.5,401 774,412 778,426 781.5,439.5 774,436 772,430 764,413 757,400 750,384 746,375" fill="#22262f" />
<line x1="765" y1="339" x2="796" y2="314" stroke="#596070" stroke-width="0.8" />
<line x1="750" y1="377" x2="779" y2="438" stroke="#141820" stroke-width="0.9" />
<polygon points="752,352 760,346 772,360 766,372 756,368" fill="#3a3e4a" />
<polygon points="772.5,322.8 774,322.2 781.5,326.2 784.5,331 783,333.2 780,333 774,330 772,326.5" fill="#f1f0eb" />
<polygon points="752.5,336 754,335.2 760,338.8 764,343.5 763,346.2 760,346.8 754,343.2 752,339.5" fill="#f1f0eb" />
<polygon points="780.5,327.5 784.5,331 783,333.2 780,333 778.6,331.6" fill="#c3c2be" />
<polygon points="759.6,340 764,343.5 763,346.2 760,346.8 758,345.2" fill="#c3c2be" />
<polygon points="745,388.5 749.5,386.8 755,392.5 756.5,398.5 751.5,398.5 746,395" fill="#666d80" />
<polygon points="758,414 760.5,410.8 766,415 767.5,422 762.5,423.2 758.5,419" fill="#666d80" />
<ellipse cx="759.5" cy="411.5" rx="0.8" ry="0.8" fill="#e6e6e6" />
<ellipse cx="773.5" cy="418.5" rx="0.7" ry="0.7" fill="#e6e6e6" />
<ellipse cx="774.5" cy="421.5" rx="0.7" ry="0.7" fill="#e6e6e6" />
<polygon points="781.8,439.6 786,442 785,443 781.2,440.6" fill="#dfe3ee" />
<line x1="726.5" y1="333" x2="734" y2="337.2" stroke="#2b3560" stroke-width="0.9" stroke-dasharray="1.6 0.8"/>
<line x1="735" y1="338" x2="742" y2="342.5" stroke="#60687f" stroke-width="0.7" stroke-dasharray="1 1"/>
</g>
<rect x="705.6" y="301.4" width="136.4" height="147" fill="none" stroke="#1b2436" stroke-width="1"/>
<line x1="842" y1="375.6" x2="855" y2="375.6" stroke="#4a4a4a" stroke-width="1" />
<text x="763" y="464" font-size="11.3" fill="#1c1c1c" textLength="21.8" lengthAdjust="spacingAndGlyphs" stroke="#1c1c1c" stroke-width="0.22">Plant</text>
<text x="309.9" y="560.3" font-size="11.3" fill="#1c1c1c" textLength="176.2" lengthAdjust="spacingAndGlyphs" stroke="#1c1c1c" stroke-width="0.22">Copyright 1990-2023 The MathWorks, Inc.</text>
<rect x="864.2" y="97" width="335.8" height="19.6" fill="#f0f0f0"/>
<text x="870.6" y="110" font-size="9.6" fill="#1e1e1e" textLength="55.5" lengthAdjust="spacingAndGlyphs">Property Inspector</text>
<ellipse cx="1184.5" cy="106.4" rx="3.7" ry="4.5" fill="#f6f6f6" stroke="#707070" stroke-width="0.8" />
<polygon points="1182.5,105 1186.5,105 1184.5,108.6" fill="#555" />
<line x1="1194.6" y1="103.3" x2="1199" y2="108.8" stroke="#777" stroke-width="1" />
<line x1="1199" y1="103.3" x2="1194.6" y2="108.8" stroke="#777" stroke-width="1" />
<rect x="866.6" y="116.6" width="333.4" height="523.4" fill="#f5f5f5"/>
<rect x="871.5" y="122.3" width="325.3" height="19" fill="#dfdfdf" stroke="#d3d3d3" stroke-width="0.9"/>
<polygon points="874.7,130.3 879,130.3 876.85,133.3" fill="#222" />
<text x="882.1" y="135.5" font-size="11.4" fill="#444" textLength="184.9" lengthAdjust="spacingAndGlyphs">Faulted Model Element: &#x27;Pump Pressure/Outport/1&#x27;</text>
<rect x="877.3" y="149" width="8.7" height="11" fill="#fff" stroke="#8a8a8a" stroke-width="0.9" rx="1"/>
<polyline points="879.04,154.72 880.95,157.58 884.61,151.2" fill="none" stroke="#1a1a1a" stroke-width="1.3" />
<text x="889.1" y="157.2" font-size="10.6" fill="#2f2f2f" textLength="23.5" lengthAdjust="spacingAndGlyphs">Enable</text>
<text x="876.9" y="176" font-size="10.6" fill="#2f2f2f" textLength="86.3" lengthAdjust="spacingAndGlyphs">Active fault for simulation:</text>
<rect x="1042" y="167.3" width="149.5" height="17.4" fill="#fbfbfb" stroke="#9c9c9c" stroke-width="1" rx="3"/>
<text x="1044.8" y="178.7" font-size="10.6" fill="#2f2f2f" textLength="85.8" lengthAdjust="spacingAndGlyphs">hydraulic_system_1_fault</text>
<polygon points="1182,174.3 1186.3,174.3 1184.15,177.1" fill="#333" />
<text x="876.9" y="200.5" font-size="10.6" fill="#2f2f2f" textLength="65.3" lengthAdjust="spacingAndGlyphs">Select fault to view:</text>
<rect x="1042" y="191.6" width="149.5" height="17.4" fill="#fbfbfb" stroke="#9c9c9c" stroke-width="1" rx="3"/>
<text x="1044.8" y="203.2" font-size="10.6" fill="#2f2f2f" textLength="85.8" lengthAdjust="spacingAndGlyphs">hydraulic_system_1_fault</text>
<polygon points="1182,198.7 1186.3,198.7 1184.15,201.5" fill="#333" />
<rect x="1042" y="216.3" width="149.5" height="17.9" fill="#fbfbfb" stroke="#b0b0b0" stroke-width="1" rx="3"/>
<text x="1093.6" y="227.5" font-size="10.6" fill="#2f2f2f" textLength="46.5" lengthAdjust="spacingAndGlyphs">Add new fault</text>
<rect x="871.2" y="248.2" width="329.8" height="19" fill="#dfdfdf" stroke="#d3d3d3" stroke-width="0.9"/>
<polygon points="875,256.1 879.3,256.1 877.15,259.3" fill="#222" />
<text x="882.1" y="261.6" font-size="11.4" fill="#444" textLength="18.8" lengthAdjust="spacingAndGlyphs">Fault</text>
<text x="877.1" y="287.8" font-size="10.6" fill="#2f2f2f" textLength="22.6" lengthAdjust="spacingAndGlyphs">Name:</text>
<rect x="969.2" y="278.8" width="225.3" height="17.7" fill="#fff" stroke="#aaa" stroke-width="1" rx="1"/>
<text x="972.4" y="290.2" font-size="10.6" fill="#2f2f2f" textLength="85.5" lengthAdjust="spacingAndGlyphs">hydraulic_system_1_fault</text>
<text x="877.1" y="311.5" font-size="10.6" fill="#2f2f2f" textLength="50" lengthAdjust="spacingAndGlyphs">Fault behavior:</text>
<text x="969.4" y="311.5" font-size="10.6" fill="#3b7cc9" textLength="225.4" lengthAdjust="spacingAndGlyphs">aircraftElevatorFaultAnalyzer_FaultModel/hydraulic_system_1_fault</text>
<line x1="969.8" y1="313.2" x2="1194.4" y2="313.2" stroke="#3b7cc9" stroke-width="0.8" />
<rect x="877.7" y="331.2" width="317" height="91.5" fill="none" stroke="#d9d9d9" stroke-width="1"/>
<rect x="884.5" y="325" width="31.5" height="12" fill="#f5f5f5"/>
<text x="887.3" y="333" font-size="11.2" fill="#2f2f2f" textLength="25.9" lengthAdjust="spacingAndGlyphs">Trigger</text>
<text x="884.8" y="349.8" font-size="10.6" fill="#2f2f2f" textLength="42.1" lengthAdjust="spacingAndGlyphs">Trigger type:</text>
<rect x="1037.5" y="341.2" width="150" height="17.5" fill="#fbfbfb" stroke="#9c9c9c" stroke-width="1" rx="3"/>
<text x="1040.6" y="353.2" font-size="10.6" fill="#2f2f2f" textLength="21" lengthAdjust="spacingAndGlyphs">Timed</text>
<polygon points="1177.5,348 1182.5,348 1180,351.2" fill="#333" />
<text x="886.6" y="376.7" font-size="10.6" fill="#2f2f2f" textLength="181.5" lengthAdjust="spacingAndGlyphs">Inject fault behavior after the specified simulation time.</text>
<text x="886.6" y="395" font-size="10.6" fill="#2f2f2f" textLength="67.3" lengthAdjust="spacingAndGlyphs">Trigger fault at time:</text>
<rect x="1037.2" y="386.2" width="148.5" height="17.5" fill="#fff" stroke="#aaa" stroke-width="1" rx="1"/>
<text x="1040.5" y="398" font-size="10.6" fill="#2f2f2f" textLength="4.7" lengthAdjust="spacingAndGlyphs">5</text>
<text x="877.1" y="435.2" font-size="10.6" fill="#2f2f2f" textLength="40" lengthAdjust="spacingAndGlyphs">Description:</text>
<rect x="877.5" y="445.4" width="316.9" height="53" fill="#fff" stroke="#aaa" stroke-width="1" rx="1"/>
<text x="880" y="457.3" font-size="10.6" fill="#777" textLength="37.9" lengthAdjust="spacingAndGlyphs">Description</text>
<rect x="0" y="631.4" width="1200" height="168.6" fill="#f0f0f0"/>
<text x="3.6" y="649" font-size="9.6" fill="#1c1c1c" textLength="33.3" lengthAdjust="spacingAndGlyphs">Fault Table</text>
<rect x="3.7" y="658.2" width="1196.3" height="19.6" fill="#e8e8e8"/>
<line x1="3.7" y1="677.8" x2="1200" y2="677.8" stroke="#d4d4d4" stroke-width="1" />
<rect x="3.7" y="677.8" width="1196.3" height="122.2" fill="#f5f5f5"/>
<rect x="3.7" y="658.8" width="33.8" height="19.6" fill="#fff"/>
<rect x="37.5" y="658.8" width="55.8" height="18.5" fill="#e4e4e4" stroke="#d0d0d0" stroke-width="0.8"/>
<text x="8.1" y="671" font-size="9.8" fill="#555" textLength="17" lengthAdjust="spacingAndGlyphs">Fault</text>
<text x="42.3" y="671" font-size="9.8" fill="#555" textLength="38.3" lengthAdjust="spacingAndGlyphs">Conditional</text>
<rect x="5.7" y="680.5" width="13.5" height="17.1" fill="#dcdcdc" stroke="#b6b6b6" stroke-width="0.9" rx="2.5"/>
<path d="M10.37,686.21 A3.3,4.3 0 1 0 14.43,686.21" fill="none" stroke="#1db136" stroke-width="1.4" stroke-linecap="round"/>
<line x1="12.4" y1="684.1" x2="12.4" y2="689" stroke="#1db136" stroke-width="1.4" stroke-linecap="round"/>
<rect x="22.4" y="680.5" width="13.3" height="17.1" fill="#efefef" stroke="#c2c2c2" stroke-width="0.9" rx="2.5"/>
<rect x="24.4" y="683.6" width="9.4" height="11" fill="#fdfdfd" stroke="#555" stroke-width="0.9"/>
<rect x="24.4" y="683.6" width="9.4" height="2" fill="#45689f"/>
<line x1="29.57" y1="685.6" x2="29.57" y2="694.6" stroke="#8a8a8a" stroke-width="0.8" />
<line x1="30.77" y1="687.8" x2="32.8" y2="687.8" stroke="#5b7fb5" stroke-width="1" />
<line x1="30.77" y1="690.2" x2="32.8" y2="690.2" stroke="#5b7fb5" stroke-width="1" />
<line x1="30.77" y1="692.6" x2="32.8" y2="692.6" stroke="#5b7fb5" stroke-width="1" />
<ellipse cx="27" cy="689.2" rx="0.9" ry="0.9" fill="#d04030" />
<line x1="27" y1="689.2" x2="29" y2="691.4" stroke="#4a6fa8" stroke-width="0.8" />
<rect x="39.5" y="680.5" width="13.3" height="17.1" fill="#efefef" stroke="#c2c2c2" stroke-width="0.9" rx="2.5"/>
<rect x="41.8" y="683.4" width="8.8" height="11.4" fill="#fcfcfc" stroke="#8a8a8a" stroke-width="0.8"/>
<line x1="44.3" y1="686" x2="44.3" y2="692" stroke="#2a4f8f" stroke-width="1" />
<polygon points="42.9,691 45.7,691 44.3,693.6" fill="#2a4f8f" />
<line x1="46.6" y1="685.6" x2="49.2" y2="685.6" stroke="#9a9a9a" stroke-width="0.8" />
<rect x="646.4" y="680.4" width="113.6" height="17.6" fill="#fff" stroke="#c9c9c9" stroke-width="1"/>
<text x="649.4" y="691.8" font-size="9.6" fill="#8a8a8a" textLength="30" lengthAdjust="spacingAndGlyphs">Search...</text>
<rect x="5.4" y="705" width="1194.6" height="22.2" fill="#f6f6f6"/>
<rect x="5.4" y="727.2" width="1194.6" height="18" fill="#fff"/>
<rect x="5.4" y="745.2" width="1194.6" height="18.2" fill="#d5d5d5"/>
<rect x="5.4" y="763.4" width="1194.6" height="17.6" fill="#fff"/>
<rect x="5.4" y="781" width="1194.6" height="17.6" fill="#fff"/>
<line x1="5.4" y1="705" x2="1200" y2="705" stroke="#cbcbcb" stroke-width="1" />
<line x1="5.4" y1="727.2" x2="1200" y2="727.2" stroke="#cbcbcb" stroke-width="1" />
<line x1="5.4" y1="745.2" x2="1200" y2="745.2" stroke="#cbcbcb" stroke-width="1" />
<line x1="5.4" y1="763.4" x2="1200" y2="763.4" stroke="#cbcbcb" stroke-width="1" />
<line x1="5.4" y1="781" x2="1200" y2="781" stroke="#cbcbcb" stroke-width="1" />
<line x1="5.4" y1="798.6" x2="1200" y2="798.6" stroke="#cbcbcb" stroke-width="1" />
<line x1="5.4" y1="705" x2="5.4" y2="800" stroke="#cbcbcb" stroke-width="1" />
<line x1="57.3" y1="705" x2="57.3" y2="800" stroke="#cbcbcb" stroke-width="1" />
<line x1="497.6" y1="705" x2="497.6" y2="800" stroke="#cbcbcb" stroke-width="1" />
<line x1="560.5" y1="705" x2="560.5" y2="800" stroke="#cbcbcb" stroke-width="1" />
<line x1="619.4" y1="705" x2="619.4" y2="800" stroke="#cbcbcb" stroke-width="1" />
<text x="7.4" y="720" font-size="9.8" fill="#1c1c1c" textLength="23.9" lengthAdjust="spacingAndGlyphs" font-weight="bold">Enable</text>
<text x="59.7" y="720" font-size="9.8" fill="#1c1c1c" textLength="97.5" lengthAdjust="spacingAndGlyphs" font-weight="bold">Model Element/Fault Name</text>
<text x="499.5" y="720" font-size="9.8" fill="#1c1c1c" textLength="41.9" lengthAdjust="spacingAndGlyphs" font-weight="bold">Active Fault</text>
<text x="562.4" y="720" font-size="9.8" fill="#1c1c1c" textLength="25.7" lengthAdjust="spacingAndGlyphs" font-weight="bold">Trigger</text>
<text x="621.9" y="720" font-size="9.8" fill="#1c1c1c" textLength="41" lengthAdjust="spacingAndGlyphs" font-weight="bold">Description</text>
<rect x="27.3" y="730" width="8.4" height="11" fill="#fff" stroke="#8a8a8a" stroke-width="0.9" rx="1"/>
<polyline points="28.98,735.72 30.83,738.58 34.36,732.2" fill="none" stroke="#1a1a1a" stroke-width="1.3" />
<polygon points="63.4,734.3 68,734.3 65.7,737.2" fill="#555" />
<line x1="73.4" y1="735.9" x2="83.2" y2="735.9" stroke="#222" stroke-width="1.1" />
<line x1="76.3" y1="735.4" x2="76.3" y2="740.5" stroke="#222" stroke-width="1.1" />
<line x1="76.3" y1="740.5" x2="83.2" y2="740.5" stroke="#222" stroke-width="1.1" />
<text x="84.1" y="739.9" font-size="9.8" fill="#5a5a5a" textLength="396.9" lengthAdjust="spacingAndGlyphs">Signal conditioning and failures /Hydraulic Pressures/Measured Hydraulic system 1 pressures/Pump Pressure/Outport/1</text>
<polyline points="91.6,749.2 88.2,754.2 91.2,754.2 87.4,759.6" fill="none" stroke="#d12f2f" stroke-width="1.1" />
<polygon points="86.8,760.4 89.1,759.5 87.7,757.9" fill="#d12f2f" />
<text x="95.5" y="757.2" font-size="9.8" fill="#141414" textLength="87.6" lengthAdjust="spacingAndGlyphs" font-weight="bold">hydraulic_system_1_fault</text>
<rect x="524.5" y="749" width="9.4" height="10.6" fill="#fff" stroke="#8a8a8a" stroke-width="0.9" rx="1"/>
<polyline points="526.38,754.51 528.45,757.27 532.4,751.12" fill="none" stroke="#1a1a1a" stroke-width="1.3" />
<text x="562.4" y="758" font-size="9.8" fill="#555" textLength="28.5" lengthAdjust="spacingAndGlyphs">Timed: 5</text>
<rect x="27.3" y="765.8" width="8.4" height="11" fill="#fff" stroke="#8a8a8a" stroke-width="0.9" rx="1"/>
<polyline points="28.98,771.52 30.83,774.38 34.36,768" fill="none" stroke="#1a1a1a" stroke-width="1.3" />
<polygon points="63.4,769.5 68,769.5 65.7,772.4" fill="#555" />
<line x1="73.4" y1="771.1" x2="83.2" y2="771.1" stroke="#222" stroke-width="1.1" />
<line x1="76.3" y1="770.6" x2="76.3" y2="775.7" stroke="#222" stroke-width="1.1" />
<line x1="76.3" y1="775.7" x2="83.2" y2="775.7" stroke="#222" stroke-width="1.1" />
<text x="84.1" y="775.1" font-size="9.8" fill="#5a5a5a" textLength="396.9" lengthAdjust="spacingAndGlyphs">Signal conditioning and failures /Hydraulic Pressures/Measured Hydraulic system 2 pressures/Pump Pressure/Outport/1</text>
<polyline points="91.6,784.7 88.2,789.7 91.2,789.7 87.4,795.1" fill="none" stroke="#d12f2f" stroke-width="1.1" />
<polygon points="86.8,795.9 89.1,795 87.7,793.4" fill="#d12f2f" />
<text x="95.5" y="792.7" font-size="9.8" fill="#141414" textLength="87.6" lengthAdjust="spacingAndGlyphs" font-weight="bold">hydraulic_system_2_fault</text>
<rect x="524.5" y="783.6" width="9.4" height="10.6" fill="#fff" stroke="#8a8a8a" stroke-width="0.9" rx="1"/>
<polyline points="526.38,789.11 528.45,791.87 532.4,785.72" fill="none" stroke="#1a1a1a" stroke-width="1.3" />
<text x="562.4" y="793.5" font-size="9.8" fill="#555" textLength="32.8" lengthAdjust="spacingAndGlyphs">Timed: 10</text>
<rect x="700" y="523.7" width="497.2" height="273.9" fill="#f0f0f0"/>
<rect x="1197.2" y="631" width="2.8" height="169" fill="#f0f0f0"/>
<rect x="700" y="523.7" width="497.2" height="22.1" fill="#003f73"/>
<text x="712.6" y="538" font-size="10" fill="#fff" textLength="40.8" lengthAdjust="spacingAndGlyphs">SIMULATION</text>
<text x="788.3" y="538" font-size="10" fill="#fff" textLength="23" lengthAdjust="spacingAndGlyphs">DEBUG</text>
<text x="848.2" y="538" font-size="10" fill="#fff" textLength="36.4" lengthAdjust="spacingAndGlyphs">MODELING</text>
<text x="919.1" y="538" font-size="10" fill="#fff" textLength="27.1" lengthAdjust="spacingAndGlyphs">FORMAT</text>
<text x="990.5" y="538" font-size="10" fill="#fff" textLength="17.4" lengthAdjust="spacingAndGlyphs">APPS</text>
<polygon points="1048.3,535 1053,525.8 1191.7,525.8 1191.7,544.2 1053,544.2" fill="#6b8fb5" />
<rect x="1059.2" y="528.9" width="9.8" height="11.7" fill="#4f4f4f"/>
<rect x="1061" y="529.7" width="6.2" height="3.8" fill="#d8d8d8"/>
<rect x="1061.5" y="535.9" width="5.3" height="4.7" fill="#f2f2f2"/>
<rect x="1064.8" y="536.7" width="1.4" height="3.2" fill="#4f4f4f"/>
<path d="M1078.1,533.5 h4.2 a3,3.3 0 0 1 0,6.6 h-2.6" fill="none" stroke="#86a7cb" stroke-width="1.3" />
<polygon points="1076.5,533.5 1079.5,530.9 1079.5,536.1" fill="#86a7cb" />
<path d="M1098.9,533.5 h-4.2 a3,3.3 0 0 0 0,6.6 h2.6" fill="none" stroke="#86a7cb" stroke-width="1.3" />
<polygon points="1100.5,533.5 1097.5,530.9 1097.5,536.1" fill="#86a7cb" />
<line x1="1114" y1="535.9" x2="1118.2" y2="540.7" stroke="#17437a" stroke-width="1.8" />
<ellipse cx="1111.8" cy="533" rx="3.6" ry="4.3" fill="#f4f8fc" stroke="#c9d7e6" stroke-width="0.8" />
<rect x="1124.5" y="528.4" width="6.6" height="8.5" fill="#f4f4f4"/>
<text x="1124.9" y="534.7" font-size="8" fill="#222" textLength="5.6" lengthAdjust="spacingAndGlyphs" font-weight="bold">»</text>
<path d="M1131.4,535 l1.2,2 l2.2,0.2 l-1.7,1.5 l0.5,2.2 l-2.2,-1.2 l-2.2,1.2 l0.5,-2.2 l-1.7,-1.5 l2.2,-0.2z" fill="#9fb9d6" stroke="#46627f" stroke-width="0.5" />
<polygon points="1138.3,533.9 1143,533.9 1140.65,536.4" fill="#111" />
<ellipse cx="1155.7" cy="534.6" rx="4.8" ry="6" fill="#f6f6f6" stroke="#d0d8e0" stroke-width="0.6" />
<text x="1153.1" y="538.2" font-size="10" fill="#333" textLength="5.4" lengthAdjust="spacingAndGlyphs" font-weight="bold">?</text>
<polygon points="1166.2,533.9 1170.8,533.9 1168.5,536.4" fill="#111" />
<rect x="1179.3" y="534.1" width="1.8" height="1.8" fill="#fff"/>
<rect x="1182.4" y="534.1" width="1.8" height="1.8" fill="#fff"/>
<rect x="1185.5" y="534.1" width="1.8" height="1.8" fill="#fff"/>
<rect x="700" y="545.8" width="12.2" height="68.4" fill="#fff"/>
<text transform="translate(709.8,608.6) rotate(-90)" font-size="7.8" fill="#222" textLength="55.6" lengthAdjust="spacingAndGlyphs" font-family="'DejaVu Sans','Liberation Sans',sans-serif">Model Browser</text>
<line x1="716" y1="548" x2="716" y2="781" stroke="#dcdcdc" stroke-width="1" />
<polygon points="720.8,555.05 725.12,550.8 725.12,553.18 729.8,553.18 729.8,556.92 725.12,556.92 725.12,559.3" fill="#8fc1ec" stroke="#4f94d4" stroke-width="0.7" stroke-linejoin="round"/>
<polygon points="747.8,555.05 743.48,550.8 743.48,553.18 738.8,553.18 738.8,556.92 743.48,556.92 743.48,559.3" fill="#e0e0e0" stroke-linejoin="round"/>
<polygon points="761.3,549.8 765.1,554.55 762.97,554.55 762.97,559.7 759.63,559.7 759.63,554.55 757.5,554.55" fill="#8fc1ec" stroke="#4f94d4" stroke-width="0.7" stroke-linejoin="round"/>
<rect x="770.7" y="547.5" width="138.9" height="13.8" fill="#f5f5f5"/>
<text x="774.6" y="558.5" font-size="9.4" fill="#222" textLength="119.8" lengthAdjust="spacingAndGlyphs">aircraftElevatorFaultAnalyzer_FaultModel</text>
<line x1="900.9" y1="551.6" x2="905.6" y2="557.6" stroke="#8a8a8a" stroke-width="0.9" />
<line x1="905.6" y1="551.6" x2="900.9" y2="557.6" stroke="#8a8a8a" stroke-width="0.9" />
<rect x="910" y="547.2" width="96.6" height="14.8" fill="#fff"/>
<text x="914.8" y="558.5" font-size="9.4" fill="#222" textLength="76.1" lengthAdjust="spacingAndGlyphs">hydraulic_system_1_fault</text>
<line x1="997.6" y1="551.6" x2="1002.3" y2="557.6" stroke="#666" stroke-width="0.9" />
<line x1="1002.3" y1="551.6" x2="997.6" y2="557.6" stroke="#666" stroke-width="0.9" />
<rect x="1167.5" y="552.5" width="8.2" height="5.2" fill="#d2d2d2" stroke="#bdbdbd" stroke-width="0.7"/>
<line x1="1168.5" y1="554.2" x2="1174.7" y2="554.2" stroke="#f4f4f4" stroke-width="0.8" />
<line x1="1168.5" y1="556" x2="1174.7" y2="556" stroke="#f4f4f4" stroke-width="0.8" />
<line x1="716" y1="561.7" x2="1181" y2="561.7" stroke="#aab0b6" stroke-width="1.4" />
<rect x="737.7" y="562" width="443.3" height="23.4" fill="#fff"/>
<line x1="737.7" y1="585.8" x2="1181" y2="585.8" stroke="#a2aab4" stroke-width="2" />
<ellipse cx="726.8" cy="574.3" rx="3.4" ry="4.1" fill="#f4f4f4" stroke="#777" stroke-width="0.9" />
<polygon points="725.5,572.4 725.5,576.2 728.6,574.3" fill="#555" />
<rect x="739.2" y="567.2" width="9.6" height="12.8" fill="#fafafa" stroke="#8a8a8a" stroke-width="0.9" rx="0.8"/>
<polygon points="740.8,569 740.8,573.6 744.6,571.3" fill="#2a7bc0" />
<rect x="743.8" y="574" width="3.6" height="4.4" fill="#e2561e" stroke="#b53e10" stroke-width="0.4" rx="0.5"/>
<line x1="745.6" y1="572.6" x2="745.6" y2="574" stroke="#b53e10" stroke-width="0.8" />
<text x="750.1" y="577.7" font-size="10.2" fill="#222" textLength="132.8" lengthAdjust="spacingAndGlyphs">aircraftElevatorFaultAnalyzer_FaultModel</text>
<polygon points="885.6,570.8 885.6,577.8 889.3,574.3" fill="#111" />
<rect x="894" y="568" width="8.5" height="11.6" fill="#fafafa" stroke="#8a8a8a" stroke-width="0.9"/>
<polyline points="900.4,569.8 897,573.6 899.6,573.6 896,577.8" fill="none" stroke="#d12f2f" stroke-width="0.9" />
<text x="904.2" y="577.7" font-size="10.2" fill="#222" textLength="81.6" lengthAdjust="spacingAndGlyphs">hydraulic_system_1_fault</text>
<polygon points="1170.8,571.2 1176.4,571.2 1173.6,575" fill="#111" />
<rect x="737.7" y="587" width="442.5" height="193.4" fill="#fff"/>
<line x1="737.3" y1="562" x2="737.3" y2="781" stroke="#c9cdd3" stroke-width="1" />
<line x1="1180.5" y1="562" x2="1180.5" y2="781" stroke="#aeb5bd" stroke-width="1.2" />
<line x1="737" y1="780.7" x2="1181" y2="780.7" stroke="#b9bfc7" stroke-width="1.2" />
<rect x="1185" y="545.8" width="12.2" height="83.9" fill="#fff"/>
<text transform="translate(1188.3,553.3) rotate(90)" font-size="7.6" fill="#222" textLength="70" lengthAdjust="spacingAndGlyphs" font-family="'DejaVu Sans','Liberation Sans',sans-serif">Property Inspector</text>
<line x1="720.8" y1="589" x2="732.5" y2="589" stroke="#c6c6c6" stroke-width="1" />
<rect x="722" y="598" width="8.2" height="10.5" fill="none" stroke="#9a9a9a" stroke-width="0.7" stroke-dasharray="1.2 1.2"/>
<ellipse cx="726.6" cy="603.3" rx="3" ry="3.6" fill="#fafafa" stroke="#444" stroke-width="1" />
<line x1="728.9" y1="606.2" x2="732.2" y2="610.6" stroke="#444" stroke-width="1.6" />
<line x1="725.1" y1="603.3" x2="728.1" y2="603.3" stroke="#444" stroke-width="0.9" />
<line x1="726.6" y1="601.6" x2="726.6" y2="605" stroke="#444" stroke-width="0.9" />
<rect x="722" y="622.3" width="10.5" height="11.3" fill="#7a7a7a" stroke="#555" stroke-width="0.8"/>
<polygon points="723.2,623.6 726.8,623.6 723.2,627.6" fill="#f6f6f6" />
<line x1="724" y1="624.5" x2="726.8" y2="627.5" stroke="#f6f6f6" stroke-width="1.5" />
<polygon points="731.3,623.6 727.7,623.6 731.3,627.6" fill="#f6f6f6" />
<line x1="730.5" y1="624.5" x2="727.7" y2="627.5" stroke="#f6f6f6" stroke-width="1.5" />
<polygon points="723.2,632.3 726.8,632.3 723.2,628.3" fill="#f6f6f6" />
<line x1="724" y1="631.4" x2="726.8" y2="628.4" stroke="#f6f6f6" stroke-width="1.5" />
<polygon points="731.3,632.3 727.7,632.3 731.3,628.3" fill="#f6f6f6" />
<line x1="730.5" y1="631.4" x2="727.7" y2="628.4" stroke="#f6f6f6" stroke-width="1.5" />
<line x1="723" y1="649.2" x2="730" y2="649.2" stroke="#3a6fb5" stroke-width="1.1" />
<polygon points="732.2,649.2 729.2,647.2 729.2,651.2" fill="#3a6fb5" />
<line x1="723" y1="653.2" x2="730" y2="653.2" stroke="#e0782a" stroke-width="1.1" />
<polygon points="732.2,653.2 729.2,651.2 729.2,655.2" fill="#e0782a" />
<rect x="723" y="668" width="8.7" height="9.6" fill="#fbfbfb" stroke="#5a5a5a" stroke-width="0.9"/>
<text x="723.8" y="674.6" font-size="5.8" fill="#333" textLength="4.2" lengthAdjust="spacingAndGlyphs" font-weight="bold">A</text>
<line x1="728.2" y1="670.6" x2="730.6" y2="670.6" stroke="#666" stroke-width="0.7" />
<line x1="728.2" y1="672.4" x2="730.6" y2="672.4" stroke="#666" stroke-width="0.7" />
<line x1="728.2" y1="674.2" x2="730.6" y2="674.2" stroke="#666" stroke-width="0.7" />
<line x1="723.6" y1="676.2" x2="731.1" y2="676.2" stroke="#bdbdbd" stroke-width="1" />
<rect x="722" y="690.5" width="10" height="11" fill="#9a9a9a" stroke="#7a7a7a" stroke-width="0.8"/>
<rect x="723.2" y="691.8" width="7.6" height="7.9" fill="#b9b9b9"/>
<path d="M723.8,696.7 q1.5,-4.5 3,0 t3,0" fill="none" stroke="#6a6a6a" stroke-width="0.9" />
<rect x="723" y="712.6" width="8.7" height="11.3" fill="#e9e9fb" stroke="#9a9aa6" stroke-width="0.9"/>
<rect x="722" y="737.6" width="10.1" height="8.1" fill="#e9e9e9" stroke="#4c4c4c" stroke-width="0.9" rx="1"/>
<rect x="723.2" y="736" width="3.2" height="1.8" fill="#e9e9e9" stroke="#4c4c4c" stroke-width="0.7"/>
<ellipse cx="727.3" cy="741.7" rx="2.4" ry="2.9" fill="#8a8a8a" stroke="#3c3c3c" stroke-width="0.9" />
<ellipse cx="727.3" cy="741.7" rx="1" ry="1.2" fill="#3c3c3c" />
<rect x="722" y="759.2" width="10.1" height="10.5" fill="#e3e3e3" stroke="#555" stroke-width="0.9"/>
<rect x="723.3" y="757" width="3.4" height="6.4" fill="#4a4a4a"/>
<rect x="728.1" y="761" width="2.9" height="2.6" fill="#9a9a9a"/>
<rect x="723.4" y="765.4" width="2.9" height="2.8" fill="#9a9a9a"/>
<rect x="727.9" y="765.4" width="2.9" height="2.8" fill="#9a9a9a"/>
<rect x="740" y="760.6" width="13" height="17.8" fill="#eeeeee" stroke="#d6d6d6" stroke-width="0.9" rx="2.5"/>
<polyline points="748.2,764.4 745,769 747.6,769 744.4,774.4" fill="none" stroke="#e0897f" stroke-width="1" />
<rect x="1166.5" y="771.5" width="2.5" height="7" fill="#f0f0f0"/>
<rect x="1170.7" y="771.5" width="2.5" height="7" fill="#f0f0f0"/>
<rect x="1174.9" y="771.5" width="2.5" height="7" fill="#f0f0f0"/>
<text x="702.3" y="795" font-size="9.6" fill="#222" textLength="20" lengthAdjust="spacingAndGlyphs">Ready</text>
<text x="950.4" y="795" font-size="9.6" fill="#222" textLength="19.4" lengthAdjust="spacingAndGlyphs">207%</text>
<text x="1137.3" y="795" font-size="9.6" fill="#2b2b98" textLength="48" lengthAdjust="spacingAndGlyphs">FixedStepAuto</text>
<line x1="1189.5" y1="784" x2="1189.5" y2="796" stroke="#dedede" stroke-width="1" />
<rect x="1195.6" y="795.2" width="1" height="1" fill="#aaa"/>
<rect x="1193.6" y="795.2" width="1" height="1" fill="#aaa"/>
<rect x="1195.6" y="793.2" width="1" height="1" fill="#aaa"/>
<rect x="1195.6" y="791.2" width="1" height="1" fill="#aaa"/>
<rect x="1193.6" y="793.2" width="1" height="1" fill="#aaa"/>
<rect x="1191.6" y="795.2" width="1" height="1" fill="#aaa"/>
<path d="M762,650.3 H800.2 L809.5,670.8 L800.2,691.2 H762 C755.5,691.2 752.2,681.5 752.2,670.8 C752.2,660 755.5,650.3 762,650.3 Z" fill="#fff" stroke="#000" stroke-width="1.3" stroke-linejoin="round"/>
<path d="M777,660.2 A3.8,5.6 0 0 0 784.5,660.2" fill="none" stroke="#222" stroke-width="0.9" />
<path d="M774.3,660.2 A6.5,9.8 0 0 0 787.2,660.2" fill="none" stroke="#222" stroke-width="0.9" />
<line x1="773.7" y1="675.8" x2="780" y2="675.8" stroke="#777" stroke-width="0.8" stroke-dasharray="1 0.8"/>
<rect x="779.6" y="674.6" width="2.2" height="2.4" fill="#111"/>
<polyline points="788.2,675.8 780.7,675.8 780.7,682 788.2,682" fill="none" stroke="#111" stroke-width="1.1" />
<line x1="809.5" y1="670.8" x2="879" y2="670.8" stroke="#555" stroke-width="1" />
<polygon points="887.8,670.8 877.8,664.6 877.8,677" fill="#000" />
<polyline points="891.7,662.2 905.2,662.2 905.2,679.5 891.7,679.5" fill="none" stroke="#555" stroke-width="1" />
<line x1="887.8" y1="670.8" x2="905.2" y2="670.8" stroke="#555" stroke-width="1" />
<text x="748.4" y="714.5" font-size="15.4" fill="#111" textLength="65.3" lengthAdjust="spacingAndGlyphs">Fault Inport</text>
<rect x="967.6" y="647" width="39.6" height="50.6" fill="#000" opacity="0.22" filter="url(#blur1)"/>
<rect x="966.4" y="645.4" width="39.3" height="50.5" fill="#fff" stroke="#111" stroke-width="1.1"/>
<text x="974.2" y="675.3" font-size="15.6" fill="#111" textLength="23" lengthAdjust="spacingAndGlyphs">100</text>
<line x1="1005.7" y1="670.8" x2="1093" y2="670.8" stroke="#555" stroke-width="1" />
<polygon points="1103,670.8 1092.6,664.6 1092.6,677" fill="#000" />
<path d="M1103,670.9 L1112.6,650.6 H1150.9 C1158,650.6 1162,660 1162,671 C1162,682 1158,691.6 1150.9,691.6 H1112.6 Z" fill="#fff" stroke="#000" stroke-width="1.3" stroke-linejoin="round"/>
<path d="M1128,669.6 A3.8,5.6 0 0 1 1135.6,669.6" fill="none" stroke="#222" stroke-width="0.9" />
<path d="M1125.4,669.6 A6.5,9.8 0 0 1 1138.2,669.6" fill="none" stroke="#222" stroke-width="0.9" />
<line x1="1125" y1="675.3" x2="1131.8" y2="675.3" stroke="#111" stroke-width="1.1" />
<rect x="1130.8" y="673.8" width="2.2" height="3" fill="#111"/>
<line x1="1133" y1="675.3" x2="1139.2" y2="675.3" stroke="#777" stroke-width="0.8" stroke-dasharray="1 0.8"/>
<line x1="1131.8" y1="681" x2="1139.2" y2="681" stroke="#777" stroke-width="0.8" stroke-dasharray="1 0.8"/>
<text x="1094.6" y="714.4" font-size="15.4" fill="#111" textLength="75.8" lengthAdjust="spacingAndGlyphs">Fault Outport</text>
<rect x="700" y="797.6" width="500" height="2.4" fill="#f0f0f0"/>
<rect x="700" y="798" width="149" height="2" fill="#fff"/>
<line x1="700" y1="797.9" x2="849" y2="797.9" stroke="#c8c8c8" stroke-width="0.8" />
<line x1="853" y1="798" x2="853" y2="800" stroke="#d0d0d0" stroke-width="1" />
</svg>
</body></html>
